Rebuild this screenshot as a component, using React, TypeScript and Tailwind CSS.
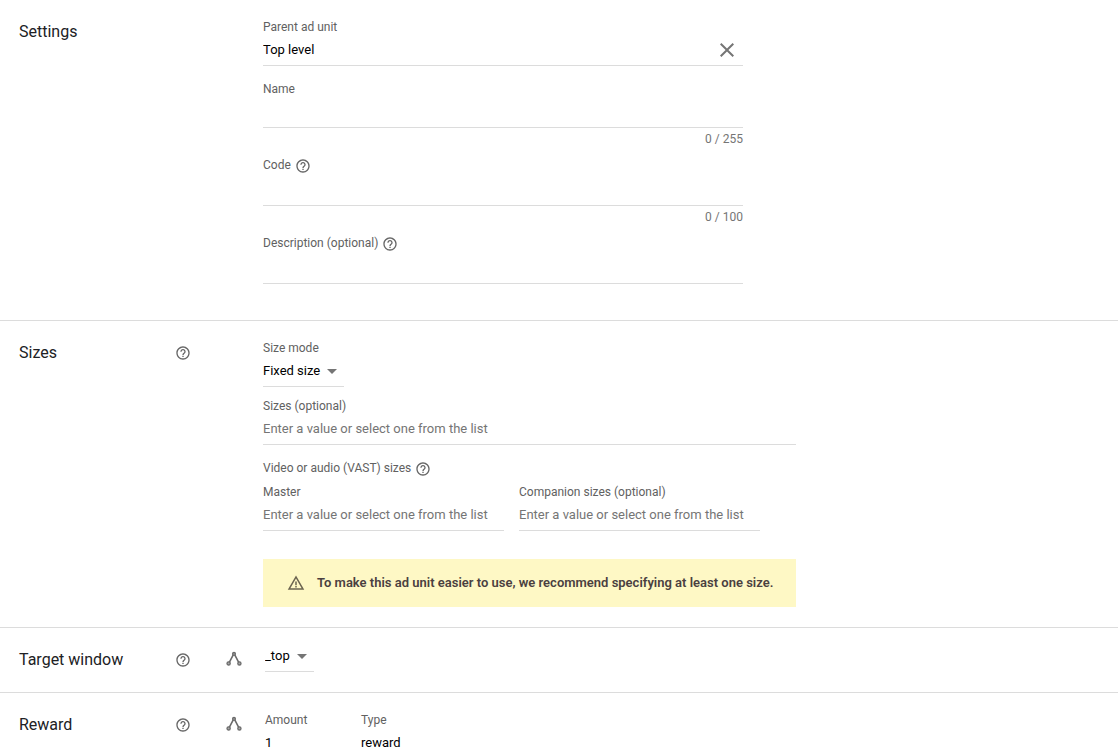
import React, { useState } from "react";
import { MdArrowDropDown, MdClose, MdHelpOutline, MdWarningAmber } from "react-icons/md";

interface SectionProps {
  title: string;
  help?: boolean;
  inherited?: boolean;
  className?: string;
  children: React.ReactNode;
}

interface FieldProps {
  id: string;
  label: string;
  help?: boolean;
  value?: string;
  placeholder?: string;
  maxLength?: number;
  className?: string;
}

interface DropdownProps {
  label: string;
  options: string[];
  className: string;
}

const valueStyle =
  "block h-[31px] w-full border-b border-[#dcdcdc] bg-transparent text-[13px] text-black placeholder:text-[#757575] placeholder:opacity-100 focus:border-blue-600 focus:outline-none";

function HelpButton({ label }: { label: string }) {
  return (
    <button type="button" aria-label={`Help: ${label}`} className="block text-[#666]">
      <MdHelpOutline className="size-4" />
    </button>
  );
}

function HierarchyIcon() {
  return (
    <svg viewBox="0 0 16 16" className="size-4" fill="none" stroke="#6b6b6b" strokeWidth="1.3">
      <path d="M7.1 4.1 3.3 11.3M8.9 4.1l3.8 7.2" strokeWidth="1.6" />
      <circle cx="8" cy="2.9" r="1.4" fill="#aaa" />
      <circle cx="2.6" cy="12.4" r="1.6" fill="#aaa" />
      <circle cx="13.4" cy="12.4" r="1.6" fill="#aaa" />
    </svg>
  );
}

function Section({ title, help, inherited, className = "", children }: SectionProps) {
  return (
    <section className={`flex border-b border-[#dcdcdc] ${className}`}>
      <h2 className="w-[175px] shrink-0 pt-5 pl-[19px] text-base leading-6 text-[#202124]">{title}</h2>
      <div className="w-[51px] shrink-0 pt-6">{help && <HelpButton label={title} />}</div>
      <div className={`shrink-0 pt-[23px] ${inherited ? "w-[39px]" : "w-[37px]"}`}>
        {inherited && <HierarchyIcon />}
      </div>
      <div className="min-w-0 flex-1">{children}</div>
    </section>
  );
}

function Field({ id, label, help, value = "", placeholder, maxLength, className = "" }: FieldProps) {
  const [text, setText] = useState(value);

  return (
    <div className={className}>
      <div className={`flex items-start gap-1 ${help ? "h-[18px]" : "h-4"}`}>
        <label htmlFor={id} className="text-xs leading-4 text-[#616161]">
          {label}
        </label>
        {help && (
          <span className="pt-px">
            <HelpButton label={label} />
          </span>
        )}
      </div>
      <input
        id={id}
        type="text"
        value={text}
        placeholder={placeholder}
        maxLength={maxLength}
        onChange={(e) => setText(e.target.value)}
        className={`${valueStyle} pb-0.5`}
      />
      {maxLength && (
        <p className="mt-[3px] text-right text-xs leading-4 text-[#757575]">
          {text.length} / {maxLength}
        </p>
      )}
    </div>
  );
}

function Dropdown({ label, options, className }: DropdownProps) {
  return (
    <div className={`relative ${className}`}>
      <select id={label} aria-label={label} className={`${valueStyle} appearance-none`}>
        {options.map((option) => (
          <option key={option}>{option}</option>
        ))}
      </select>
      <MdArrowDropDown className="pointer-events-none absolute top-[3px] right-0 size-6 text-[#757575]" />
    </div>
  );
}

export default function App() {
  const [parent, setParent] = useState("Top level");

  return (
    <main className="min-h-screen bg-white font-['Roboto',sans-serif]">
      <Section title="Settings" className="pb-9">
        <div className="max-w-[480px] pt-[19px]">
          <label htmlFor="parent" className="block text-xs leading-4 text-[#616161]">
            Parent ad unit
          </label>
          <div className="flex h-[31px] items-center border-b border-[#dcdcdc] pr-1">
            <input
              id="parent"
              type="text"
              value={parent}
              onChange={(e) => setParent(e.target.value)}
              className="min-w-0 flex-1 bg-transparent text-[13px] text-black focus:outline-none"
            />
            <button type="button" aria-label="Clear" onClick={() => setParent("")} className="text-[#757575]">
              <MdClose className="size-6" />
            </button>
          </div>
          <Field id="name" label="Name" maxLength={255} className="mt-[15px]" />
          <Field id="code" label="Code" help maxLength={100} className="mt-[10px]" />
          <Field id="description" label="Description (optional)" help className="mt-[10px]" />
        </div>
      </Section>

      <Section title="Sizes" help className="pb-5">
        <div className="max-w-[533px] pt-[19px]">
          <label htmlFor="Size mode" className="block text-xs leading-4 text-[#616161]">
            Size mode
          </label>
          <Dropdown label="Size mode" options={["Fixed size", "Smart banner"]} className="w-[81px]" />
          <Field
            id="sizes"
            label="Sizes (optional)"
            placeholder="Enter a value or select one from the list"
            className="mt-[11px]"
          />
          <div className="mt-[15px] flex h-[18px] items-start gap-1">
            <p className="text-xs leading-4 text-[#616161]">Video or audio (VAST) sizes</p>
            <span className="pt-px">
              <HelpButton label="Video or audio (VAST) sizes" />
            </span>
          </div>
          <div className="mt-[6px] flex gap-[15px]">
            <Field
              id="master"
              label="Master"
              placeholder="Enter a value or select one from the list"
              className="w-[241px]"
            />
            <Field
              id="companion"
              label="Companion sizes (optional)"
              placeholder="Enter a value or select one from the list"
              className="w-[241px]"
            />
          </div>
          <div role="alert" className="mt-7 flex min-h-12 items-center gap-3 bg-[#fef8c5] pr-3 pl-6">
            <MdWarningAmber className="size-[18px] shrink-0 text-[#6b6450]" />
            <p className="text-[13px] leading-5 font-semibold text-[#4a4040]">
              To make this ad unit easier to use, we recommend specifying at least one size.
            </p>
          </div>
        </div>
      </Section>

      <Section title="Target window" help inherited className="pb-5">
        <div className="pt-[13px]">
          <Dropdown label="Target window" options={["_top", "_blank"]} className="w-[49px]" />
        </div>
      </Section>

      <Section title="Reward" help inherited>
        <div className="flex gap-8 pt-[19px]">
          <Field id="amount" label="Amount" value="1" className="w-16" />
          <Field id="type" label="Type" value="reward" className="w-40" />
        </div>
      </Section>
    </main>
  );
}
